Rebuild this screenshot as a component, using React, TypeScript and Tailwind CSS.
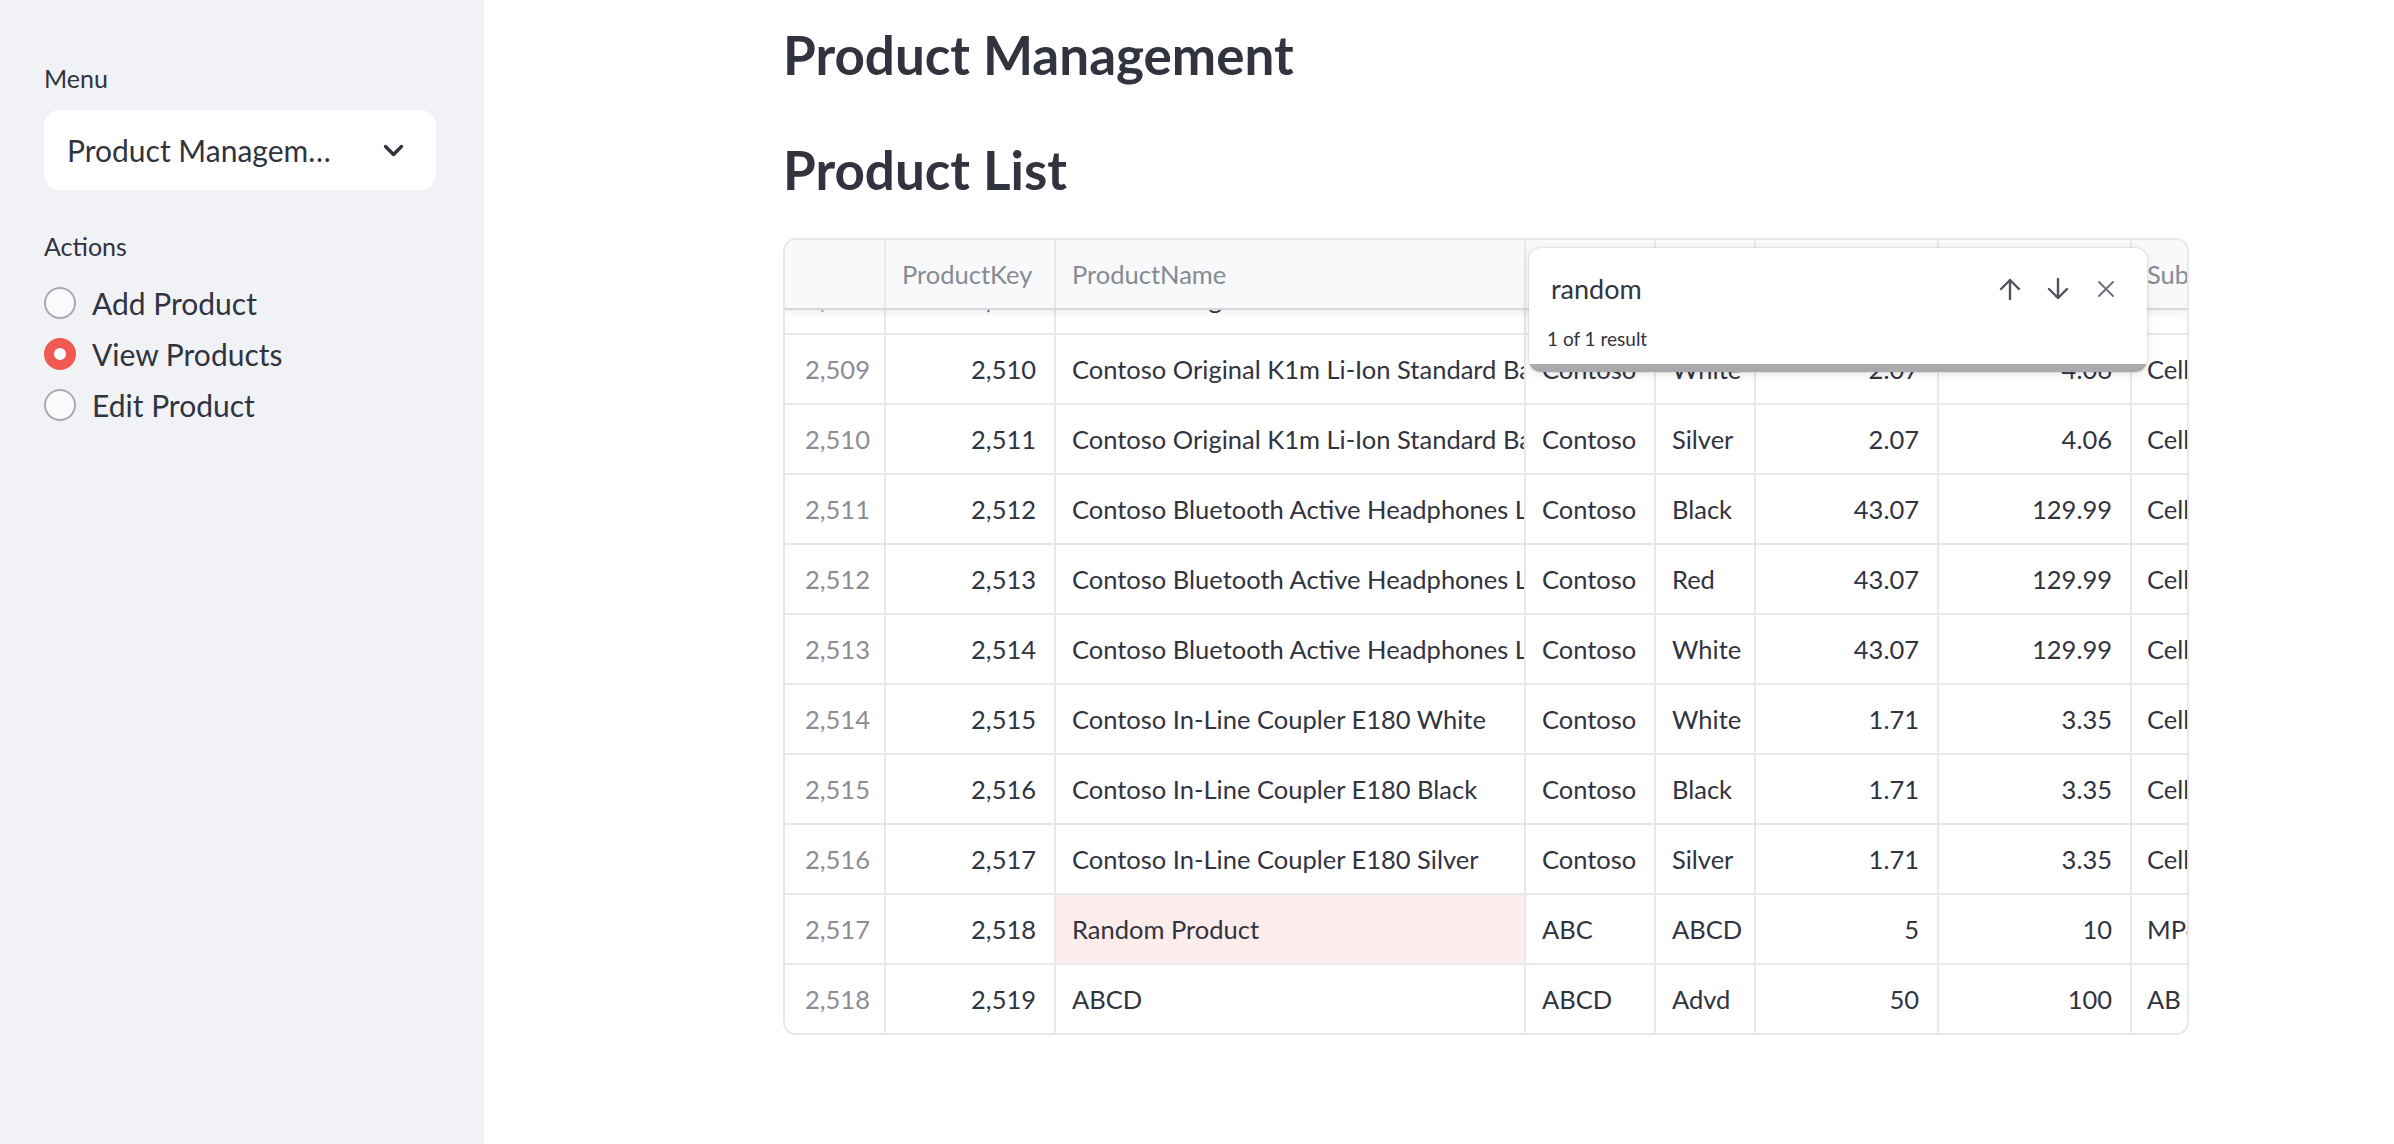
import React from 'react';

type Row = {
  idx: string;
  key: string;
  name: string;
  brand: string;
  color: string;
  cost: string;
  price: string;
  sub: string;
  hit?: boolean;
};

const rows: Row[] = [
  { idx: '2,508', key: '2,509', name: 'Contoso Original K1m Li-Ion Standard Battery E100 Black', brand: 'Contoso', color: 'Black', cost: '2.07', price: '4.06', sub: 'Cell phones Accessories' },
  { idx: '2,509', key: '2,510', name: 'Contoso Original K1m Li-Ion Standard Battery E100 White', brand: 'Contoso', color: 'White', cost: '2.07', price: '4.06', sub: 'Cell phones Accessories' },
  { idx: '2,510', key: '2,511', name: 'Contoso Original K1m Li-Ion Standard Battery E100 Silver', brand: 'Contoso', color: 'Silver', cost: '2.07', price: '4.06', sub: 'Cell phones Accessories' },
  { idx: '2,511', key: '2,512', name: 'Contoso Bluetooth Active Headphones L15 Black', brand: 'Contoso', color: 'Black', cost: '43.07', price: '129.99', sub: 'Cell phones Accessories' },
  { idx: '2,512', key: '2,513', name: 'Contoso Bluetooth Active Headphones L15 Red', brand: 'Contoso', color: 'Red', cost: '43.07', price: '129.99', sub: 'Cell phones Accessories' },
  { idx: '2,513', key: '2,514', name: 'Contoso Bluetooth Active Headphones L15 White', brand: 'Contoso', color: 'White', cost: '43.07', price: '129.99', sub: 'Cell phones Accessories' },
  { idx: '2,514', key: '2,515', name: 'Contoso In-Line Coupler E180 White', brand: 'Contoso', color: 'White', cost: '1.71', price: '3.35', sub: 'Cell phones Accessories' },
  { idx: '2,515', key: '2,516', name: 'Contoso In-Line Coupler E180 Black', brand: 'Contoso', color: 'Black', cost: '1.71', price: '3.35', sub: 'Cell phones Accessories' },
  { idx: '2,516', key: '2,517', name: 'Contoso In-Line Coupler E180 Silver', brand: 'Contoso', color: 'Silver', cost: '1.71', price: '3.35', sub: 'Cell phones Accessories' },
  { idx: '2,517', key: '2,518', name: 'Random Product', brand: 'ABC', color: 'ABCD', cost: '5', price: '10', sub: 'MP4&MP3', hit: true },
  { idx: '2,518', key: '2,519', name: 'ABCD', brand: 'ABCD', color: 'Advd', cost: '50', price: '100', sub: 'AB' },
];

const cell = 'flex shrink-0 items-center overflow-hidden whitespace-nowrap border-r-2 border-[#e8e8eb]';

function Radio({ label, checked }: { label: string; checked?: boolean }) {
  return (
    <div className="flex h-[51px] items-center gap-[16px]">
      {checked ? (
        <span className="flex h-[32px] w-[32px] items-center justify-center rounded-full bg-[#f05a52]">
          <span className="h-[12px] w-[12px] rounded-full bg-white" />
        </span>
      ) : (
        <span className="h-[32px] w-[32px] rounded-full border-2 border-[#a8aab0] bg-[#f9fafb]" />
      )}
      <span className="text-[30px] leading-[36px]">{label}</span>
    </div>
  );
}

function SearchBox() {
  return (
    <div className="absolute left-[746px] top-[10px] z-20 flex h-[124px] w-[618px] flex-col overflow-hidden rounded-[12px] bg-white shadow-[0_0_0_1px_rgba(0,0,0,0.05),0_2px_8px_rgba(0,0,0,0.12)]">
      <div className="mt-[23px] flex h-[36px] items-center pl-[22px] pr-[33px]">
        <span className="text-[27px] leading-[36px] text-[#31333f]">random</span>
        <svg className="ml-auto" width="22" height="22" viewBox="0 0 22 22" fill="none" stroke="#50525c" strokeWidth="2.4" strokeLinecap="round" strokeLinejoin="round">
          <path d="M11 2v19M2 11l9-9 9 9" />
        </svg>
        <svg className="ml-[26px]" width="22" height="22" viewBox="0 0 22 22" fill="none" stroke="#50525c" strokeWidth="2.4" strokeLinecap="round" strokeLinejoin="round">
          <path d="M11 1v19M2 11l9 9 9-9" />
        </svg>
        <svg className="ml-[29px]" width="16" height="16" viewBox="0 0 16 16" fill="none" stroke="#6c6e77" strokeWidth="1.8" strokeLinecap="round">
          <path d="M1 1l14 14M15 1L1 15" />
        </svg>
      </div>
      <div className="mt-[20px] pl-[18px] text-[19px] leading-[24px] text-[#31333f]">1 of 1 result</div>
      <div className="mt-auto h-[8px] bg-[#a9a9ae]" />
    </div>
  );
}

function DataTable() {
  return (
    <div className="relative mt-[38px] w-[1406px]">
      <div className="overflow-hidden rounded-[13px] border-2 border-[#e8e8eb] text-[25.5px]">
        <div className="relative z-10 flex h-[70px] border-b-2 border-[#d6d7db] bg-[#f8f9fb] text-[#878a93] shadow-[0_3px_8px_rgba(0,0,0,0.07)]">
          <div className={`${cell} w-[101px]`} />
          <div className={`${cell} w-[170px] px-[16px]`}>ProductKey</div>
          <div className={`${cell} w-[470px] px-[16px]`}>ProductName</div>
          <div className={`${cell} w-[130px] px-[16px]`}>Brand</div>
          <div className={`${cell} w-[100px] px-[16px]`}>ColorName</div>
          <div className={`${cell} w-[183px] px-[16px]`}>UnitCost</div>
          <div className={`${cell} w-[193px] px-[16px]`}>UnitPrice</div>
          <div className={`${cell} w-[300px] px-[15px]`}>Subcategory</div>
        </div>
        <div className="overflow-hidden text-[#31333f]">
          {rows.map((r, i) => (
            <div
              key={r.key}
              className={
                i === 0
                  ? 'mt-[-45px] flex h-[70px] border-b-2 border-[#e8e8eb]'
                  : i === rows.length - 1
                    ? 'flex h-[68px]'
                    : 'flex h-[70px] border-b-2 border-[#e8e8eb]'
              }
            >
              <div className={`${cell} w-[101px] pl-[20px] text-[#8b8d96]`}>{r.idx}</div>
              <div className={`${cell} w-[170px] justify-end pr-[18px]`}>{r.key}</div>
              <div className={`${cell} w-[470px] pl-[16px] ${r.hit ? 'bg-[#fcecec]' : ''}`}>{r.name}</div>
              <div className={`${cell} w-[130px] px-[16px]`}>{r.brand}</div>
              <div className={`${cell} w-[100px] px-[16px]`}>{r.color}</div>
              <div className={`${cell} w-[183px] justify-end pr-[18px]`}>{r.cost}</div>
              <div className={`${cell} w-[193px] justify-end pr-[18px]`}>{r.price}</div>
              <div className={`${cell} w-[300px] px-[15px]`}>{r.sub}</div>
            </div>
          ))}
        </div>
      </div>
      <SearchBox />
    </div>
  );
}

export default function App() {
  return (
    <div className="flex h-[1144px] w-full bg-white font-[family-name:Lato,sans-serif] text-[#31333f]">
      <aside className="w-[484px] shrink-0 bg-[#f0f2f6] px-[44px] pt-[63px]">
        <div className="text-[25px] leading-[30px]">Menu</div>
        <div className="mt-[17px] flex h-[80px] w-[392px] items-center rounded-[16px] bg-white pl-[23px]">
          <span className="w-[274px] truncate text-[30px] leading-[36px]">Product Management</span>
          <svg className="ml-[42px]" width="21" height="13" viewBox="0 0 21 13" fill="none" stroke="#31333f" strokeWidth="3.4" strokeLinecap="round" strokeLinejoin="round">
            <path d="M2.5 2.5l8 8 8-8" />
          </svg>
        </div>
        <div className="mt-[41px] text-[25px] leading-[30px]">Actions</div>
        <div className="mt-[16px] flex flex-col">
          <Radio label="Add Product" />
          <Radio label="View Products" checked />
          <Radio label="Edit Product" />
        </div>
      </aside>
      <main className="flex-1 pl-[299px] pt-[25px]">
        <h1 className="text-[53px] font-bold leading-[60px]">Product Management</h1>
        <h2 className="mt-[55px] text-[53px] font-bold leading-[60px]">Product List</h2>
        <DataTable />
      </main>
    </div>
  );
}
